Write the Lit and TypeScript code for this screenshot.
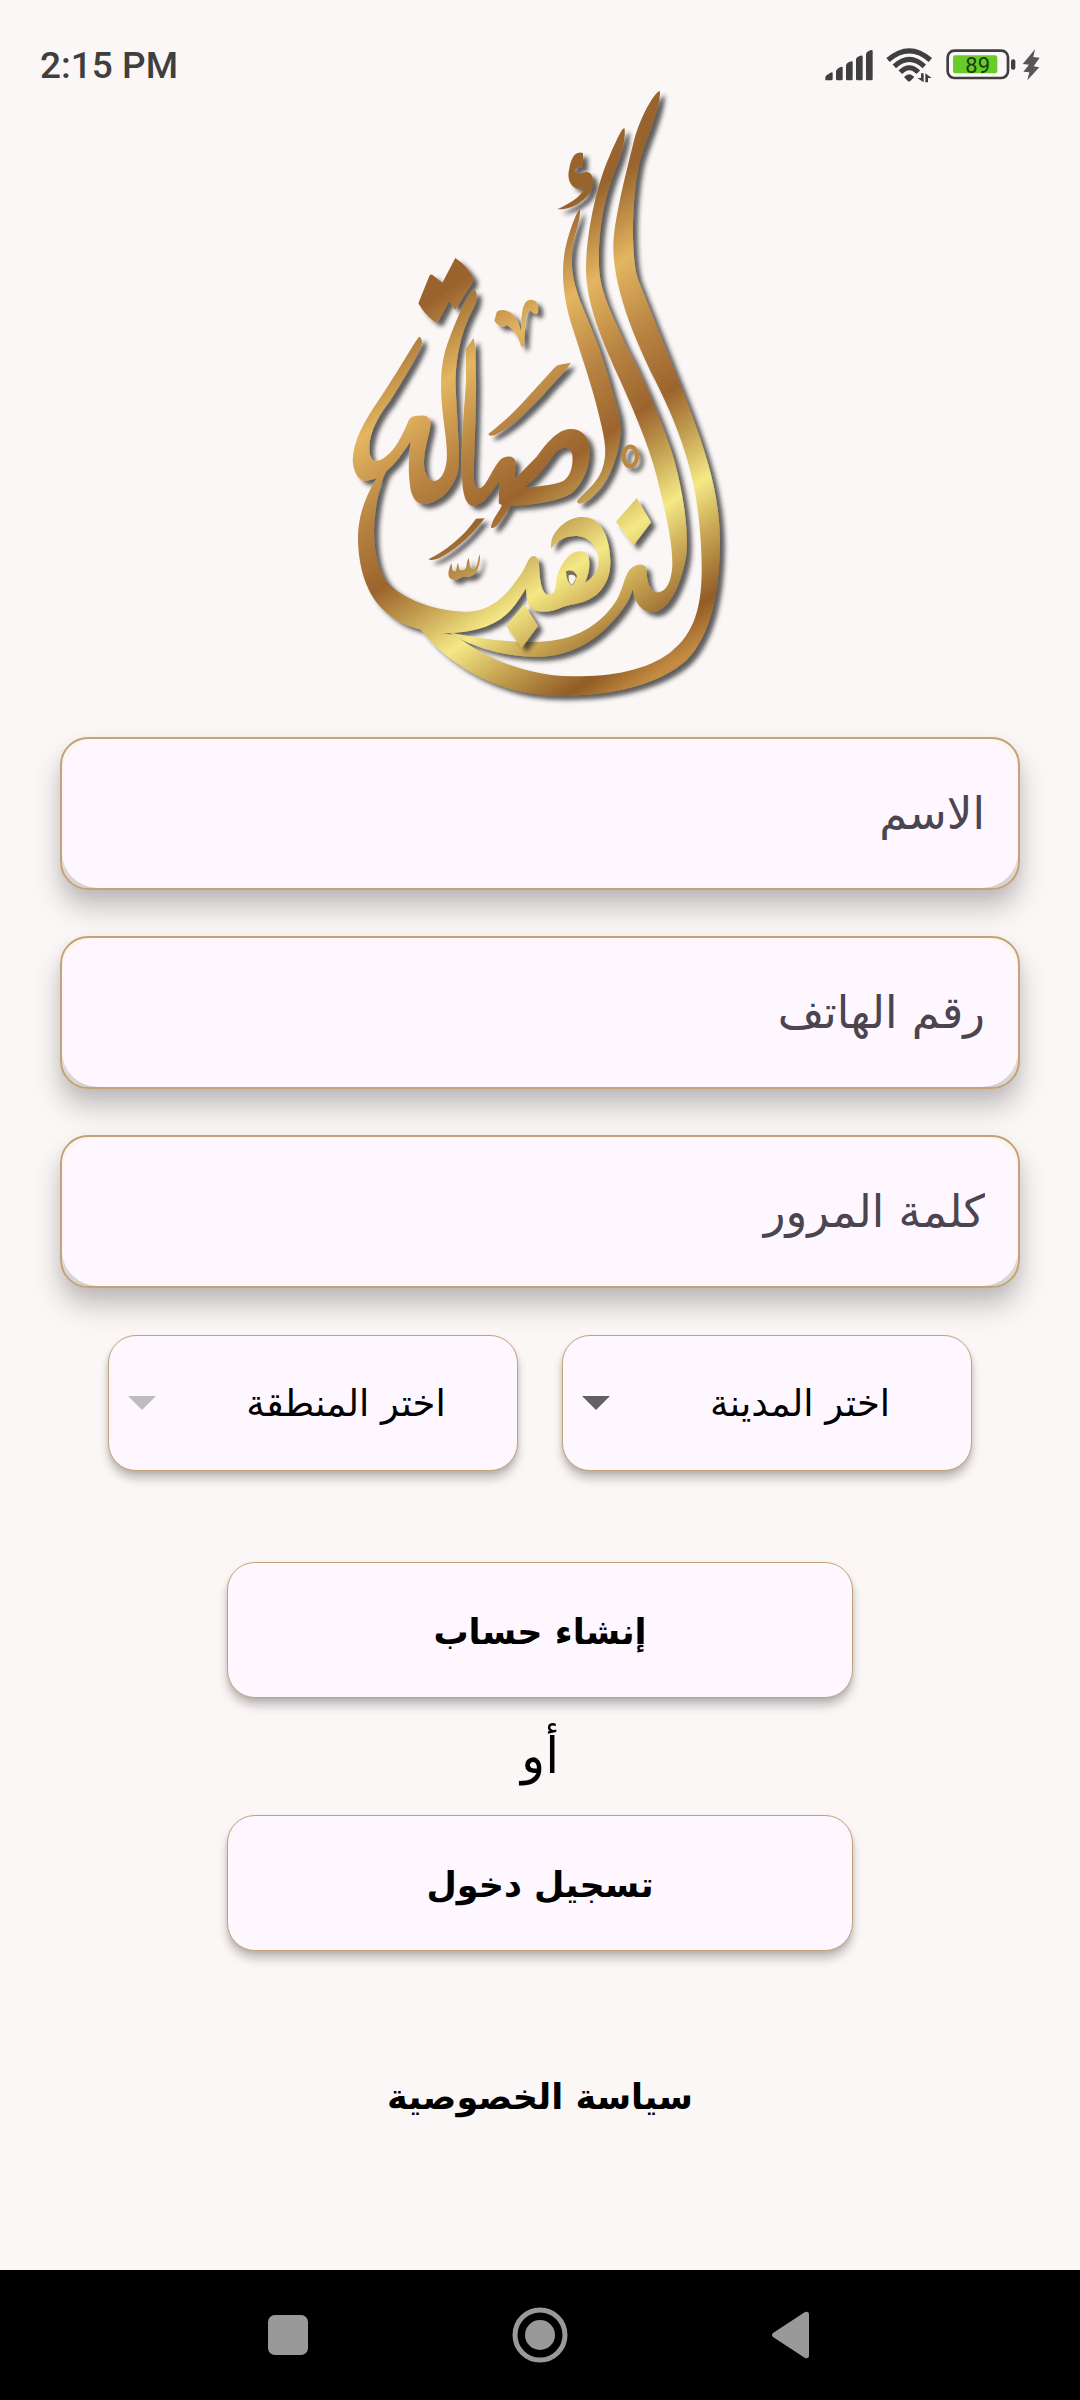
import { LitElement, html, css } from "lit";
import { customElement, property } from "lit/decorators.js";

@customElement("status-bar")
class StatusBar extends LitElement {
  static styles = css`
    :host {
      display: flex;
      align-items: center;
      justify-content: space-between;
      height: 44px;
      padding: 44px 40px 0;
      direction: ltr;
      color: #3f3f3f;
    }
    .time {
      font: 500 37px/44px Roboto, sans-serif;
    }
    .icons,
    .power {
      display: flex;
      align-items: center;
    }
    .icons {
      gap: 13px;
    }
    .power {
      gap: 6px;
    }
    svg {
      display: block;
      height: 37px;
      margin-bottom: 2px;
      fill: #3f3f3f;
    }
    .line {
      fill: none;
      stroke: #3f3f3f;
    }
    .level {
      fill: #66cc29;
    }
    .percent {
      font: 66px Roboto, sans-serif;
      fill: #1d3d0c;
    }
    .bolt {
      fill: #5a5558;
    }
  `;

  render() {
    return html`
      <span class="time">2:15 PM</span>
      <div class="icons">
        <svg viewBox="72 50 144 111" width="48" aria-hidden="true">
          <path d="M73 150V140Q75 134 84 130Q95 123 95 128V146Q95 150 91 150Z" />
          <path d="M105 146V122Q106 117 114 112Q125 106 125 112V146Q125 150 121 150H109Q105 150 105 146Z" />
          <path d="M135 146V104Q136 99 144 95Q155 90 155 95V146Q155 150 151 150H139Q135 150 135 146Z" />
          <path d="M165 146V86Q166 81 174 78Q185 73 185 79V146Q185 150 181 150H169Q165 150 165 146Z" />
          <path d="M195 146V70Q196 65 204 61Q215 56 215 62V146Q215 150 211 150H199Q195 150 195 146Z" />
        </svg>
        <svg viewBox="254 50 141 111" width="47" aria-hidden="true">
          <g class="line" stroke-width="15">
            <path d="M260 89Q324 34 387 89" />
            <path d="M279 108Q324 66 369 108" />
            <path d="M297 126Q324 98 351 126" />
          </g>
          <path d="M308 140Q324 124 339 140L327 152Q323 155 319 152Z" />
          <path d="M359 129H367V156L348 143H359ZM372 156V129L391 143H380V156Z" />
        </svg>
        <div class="power">
          <svg viewBox="437 50 210 111" width="70" role="img" aria-label="89">
            <rect class="line" x="442" y="61" width="181" height="82" rx="20" stroke-width="8" />
            <rect x="632" y="87" width="13" height="31" rx="6" />
            <rect class="level" x="458" y="75" width="133" height="54" rx="7" />
            <text class="percent" x="532" y="127" text-anchor="middle">89</text>
          </svg>
          <svg class="bolt" viewBox="666 50 54 111" width="18" aria-hidden="true">
            <path d="M705 57L668 101L687 103L670 124L688 126L682 150L718 111L701 108L719 82L700 80Z" />
          </svg>
        </div>
      </div>
    `;
  }
}

@customElement("brand-logo")
class BrandLogo extends LitElement {
  static styles = css`
    :host {
      display: flex;
      justify-content: center;
    }
    svg {
      display: block;
      width: 400px;
      max-width: 100%;
      overflow: visible;
    }
    .ring {
      fill: none;
      stroke: #b98740;
      stroke-width: 13;
    }
  `;

  render() {
    return html`
      <svg viewBox="0 0 1200 1890" role="img" aria-label="أصالة الذهب">
        <defs>
          <linearGradient id="gold" gradientUnits="userSpaceOnUse" x1="372" y1="547" x2="1162" y2="1710">
            <stop offset="0.03" stop-color="#99642f" />
            <stop offset="0.187" stop-color="#e4b660" />
            <stop offset="0.34" stop-color="#b78342" />
            <stop offset="0.475" stop-color="#9c642d" />
            <stop offset="0.56" stop-color="#c09a4e" />
            <stop offset="0.671" stop-color="#f5e985" />
            <stop offset="0.76" stop-color="#ccab57" />
            <stop offset="0.888" stop-color="#915c25" />
            <stop offset="0.96" stop-color="#c48c42" />
          </linearGradient>
          <filter id="cast" filterUnits="userSpaceOnUse" x="0" y="0" width="1260" height="1920">
            <feDropShadow dx="15" dy="13" stdDeviation="6" flood-color="#222" flood-opacity="0.72" />
          </filter>
        </defs>
        <g fill="url(#gold)" filter="url(#cast)">
          <path
            d="M960 34C950 28 900 105 880 190C855 290 820 430 820 500C820 620 880 770 945 900C1010 1030 1040 1120 1060 1210C1078 1300 1086 1400 1085 1480C1083 1580 1065 1660 990 1718C920 1770 820 1789 700 1789C570 1789 440 1740 345 1665L302 1660C380 1660 455 1645 500 1602C530 1574 545 1545 558 1525C560 1555 562 1575 575 1587C600 1602 640 1595 670 1580C700 1572 740 1570 772 1542C805 1510 812 1475 811 1440C809 1400 800 1350 770 1325C740 1304 700 1308 670 1332C640 1356 630 1380 634 1406C655 1376 685 1366 712 1368C755 1372 775 1410 775 1440C775 1475 760 1492 735 1508C748 1480 752 1450 744 1426C735 1410 705 1408 684 1430C660 1455 650 1485 648 1512C646 1535 640 1543 620 1544C600 1530 600 1490 597 1455C595 1435 588 1424 574 1430C560 1440 556 1470 530 1500C490 1560 440 1595 380 1595C290 1594 200 1562 150 1515C115 1480 102 1420 102 1350C104 1280 122 1200 140 1172C165 1155 190 1115 212 1084C204 1140 205 1190 212 1230C220 1262 235 1273 255 1272C300 1268 340 1225 354 1175C362 1120 350 1010 347 920C344 840 365 750 395 695C412 665 415 640 404 630C385 628 350 720 330 770C305 830 301 890 304 950C309 1030 324 1090 320 1140C316 1180 300 1204 280 1203C258 1198 251 1170 252 1140C254 1100 270 1060 272 1030C270 1008 255 1006 238 1007C220 1006 208 1012 204 1026C185 1070 165 1110 140 1127C115 1150 90 1150 88 1110C86 1060 115 1005 150 963C190 900 235 825 246 790C246 775 240 768 236 772C215 800 180 865 120 955C75 1020 40 1080 38 1140C40 1180 58 1205 80 1203L110 1195C75 1250 54 1310 54 1375C55 1470 82 1540 125 1585C165 1625 205 1640 243 1649C285 1705 350 1755 420 1792C510 1835 590 1848 670 1847C820 1847 960 1812 1040 1740C1110 1668 1140 1540 1140 1380C1138 1240 1100 1120 1035 950C1000 860 930 690 895 600C870 530 876 340 900 240C925 160 960 90 960 34Z"
          />
          <path
            d="M854 146C848 138 830 180 810 225C775 300 738 450 738 570C740 680 790 790 840 900C890 1010 940 1130 960 1230C982 1320 997 1390 997 1450C996 1510 975 1540 948 1537C920 1525 922 1490 918 1462C910 1448 885 1452 870 1468C850 1495 852 1520 830 1560C790 1625 720 1675 620 1684C540 1690 440 1680 330 1658L345 1668C430 1715 520 1732 600 1730C690 1728 760 1685 810 1632C845 1595 868 1565 878 1528C885 1570 905 1598 940 1597C985 1594 1025 1510 1038 1430C1050 1340 1020 1190 990 1100C960 1010 900 870 860 800C820 710 780 640 777 560C773 430 800 330 835 245C845 215 857 180 854 146Z"
          />
          <path
            d="M720 388C712 388 680 470 672 530C664 590 672 670 700 750C725 830 760 930 778 1010C795 1080 804 1120 785 1172C770 1210 735 1235 713 1260C708 1270 716 1274 730 1268C770 1250 810 1195 828 1130C845 1080 846 1030 832 985C810 910 790 830 758 755C725 670 690 610 696 520C698 470 722 430 720 388Z"
          />
          <path
            d="M729 219C703 210 692 240 688 265C680 295 690 318 710 326L733 325C725 350 685 372 652 388C710 390 755 345 760 312C760 285 750 273 735 277L715 281C702 274 705 264 715 263L729 262Z"
          />
          <path
            d="M346 534Q378 555 398 590Q402 597 398 606L346 690L328 662L296 722Q291 730 280 722Q255 705 235 670L268 588Q272 581 278 585L307 608Z"
          />
          <path
            fill-rule="evenodd"
            d="M401 773L378 806L378 900C374 980 362 1080 366 1190C368 1250 380 1278 402 1278C440 1270 455 1230 478 1204L476 1270L486 1276C475 1300 455 1320 453 1343C470 1350 490 1310 511 1278C580 1276 650 1265 690 1243C735 1210 750 1150 749 1110C748 1065 720 1045 690 1047C650 1050 620 1090 590 1130L524 1197L527 1148C525 1125 495 1125 480 1140C455 1170 445 1205 426 1222C410 1232 400 1215 401 1180C404 1080 409 980 408 900L406 800ZM550 1223C600 1190 625 1145 648 1117C670 1098 690 1098 697 1125C700 1160 690 1190 670 1203C640 1216 590 1220 550 1223Z"
          />
          <path
            d="M692 848L658 854Q650 855 642 865L560 955C520 1000 480 1035 445 1062Q450 1074 475 1060C530 1030 575 980 610 945C640 905 670 885 692 848Z"
          />
          <path
            d="M463 722L470 697C480 685 505 690 520 705C535 720 538 735 543 755C545 730 540 660 572 659C590 660 597 670 594 700Q580 706 574 694C560 685 557 715 556 735L552 795Q547 808 542 795C535 770 520 745 500 736C490 745 475 740 463 722Z"
          />
          <path d="M434 1315L408 1316C370 1370 320 1410 265 1438Q280 1444 310 1428C360 1400 400 1360 434 1315Z" />
          <path
            d="M334 1450C320 1480 322 1500 345 1500C360 1498 364 1488 380 1490C408 1494 422 1460 420 1423C412 1435 414 1464 400 1467C388 1468 390 1450 386 1434C376 1448 384 1466 370 1470C354 1474 358 1460 354 1448C348 1460 352 1476 342 1474C334 1470 338 1460 334 1450Z"
          />
          <path d="M890 1254L933 1327L880 1397L828 1325Z" />
        </g>
        <ellipse class="ring" cx="871" cy="1129" rx="20" ry="29" filter="url(#cast)" />
        <path d="M678 1474Q700 1466 711 1488Q704 1512 694 1516Q680 1506 678 1474Z" fill="#77705c" />
        <path d="M686 1486Q702 1480 708 1494Q702 1510 694 1514Q684 1506 686 1486Z" fill="#f6f2ee" />
        <g fill="url(#gold)" filter="url(#cast)">
          <path d="M553 1573L594 1638L545 1704L498 1637Z" />
        </g>
      </svg>
    `;
  }
}

@customElement("text-field")
class TextField extends LitElement {
  static styles = css`
    :host {
      display: block;
    }
    .box {
      display: flex;
      border: 2px solid #c3a377;
      border-radius: 28px;
      background: linear-gradient(#fbf5ef 50%, #d3d1cf);
      box-shadow: 0 18px 28px rgba(0, 0, 0, 0.22), 0 6px 14px rgba(0, 0, 0, 0.06);
    }
    input {
      flex: 1;
      min-width: 0;
      height: 149px;
      box-sizing: border-box;
      padding: 0 33px;
      border: 0;
      border-radius: 36px;
      outline: none;
      background: #fef7ff;
      color: #4a454e;
      direction: rtl;
      font: 45px "DejaVu Sans", sans-serif;
    }
    input::placeholder {
      color: #4a454e;
      opacity: 1;
    }
  `;

  @property() label = "";
  @property() type = "text";

  render() {
    return html`
      <div class="box">
        <input type=${this.type} placeholder=${this.label} aria-label=${this.label} />
      </div>
    `;
  }
}

@customElement("select-field")
class SelectField extends LitElement {
  static styles = css`
    :host {
      display: block;
      flex: 1;
      min-width: 0;
    }
    .box {
      display: grid;
      align-items: center;
      direction: ltr;
    }
    select,
    svg {
      grid-area: 1 / 1;
    }
    select {
      width: 100%;
      height: 136px;
      box-sizing: border-box;
      padding: 0 0 0 66px;
      border: 1px solid #c3a377;
      border-radius: 28px;
      background: #fef7ff;
      box-shadow: 0 8px 10px rgba(0, 0, 0, 0.22), 0 2px 4px rgba(0, 0, 0, 0.1);
      color: #000;
      opacity: 1;
      appearance: none;
      direction: rtl;
      text-align: center;
      text-align-last: center;
      font: 37px "DejaVu Sans", sans-serif;
    }
    svg {
      margin-left: 20px;
      fill: #616161;
      pointer-events: none;
    }
    select:disabled + svg {
      fill: #bdbdbd;
    }
  `;

  @property() label = "";
  @property({ type: Boolean }) disabled = false;

  render() {
    return html`
      <div class="box">
        <select aria-label=${this.label} ?disabled=${this.disabled}>
          <option>${this.label}</option>
        </select>
        <svg width="28" height="14" viewBox="0 0 28 14" aria-hidden="true"><path d="M0 0H28L14 14Z" /></svg>
      </div>
    `;
  }
}

@customElement("nav-bar")
class NavBar extends LitElement {
  static styles = css`
    :host {
      display: flex;
      justify-content: space-around;
      align-items: center;
      height: 130px;
      padding: 0 15%;
      background: #000;
      direction: ltr;
    }
    button {
      display: flex;
      padding: 0;
      border: 0;
      background: none;
    }
    svg {
      fill: #999;
    }
    .ring {
      fill: none;
      stroke: #999;
      stroke-width: 5;
    }
  `;

  render() {
    return html`
      <button aria-label="Recents">
        <svg width="60" height="60"><rect x="10" y="10" width="40" height="40" rx="7" /></svg>
      </button>
      <button aria-label="Home">
        <svg width="60" height="60"><circle class="ring" cx="30" cy="30" r="25" /><circle cx="30" cy="30" r="15" /></svg>
      </button>
      <button aria-label="Back">
        <svg width="60" height="60"><path d="M43 7Q47 6 47 10V50Q47 54 43 53L11 32Q9 30 11 28Z" /></svg>
      </button>
    `;
  }
}

@customElement("app-root")
class AppRoot extends LitElement {
  static styles = css`
    :host {
      display: flex;
      flex-direction: column;
      min-height: 100vh;
      background: #fbf7f6;
      color: #000;
      direction: rtl;
      font-family: "DejaVu Sans", sans-serif;
    }
    brand-logo {
      margin-top: -8px;
    }
    main {
      flex: 1;
      display: flex;
      flex-direction: column;
      padding: 27px 60px 40px;
    }
    .fields {
      display: flex;
      flex-direction: column;
      gap: 46px;
    }
    .selects {
      display: flex;
      gap: 44px;
      padding: 47px 48px 0;
    }
    .actions {
      display: flex;
      flex-direction: column;
      align-items: center;
      padding-top: 91px;
    }
    .action {
      width: 100%;
      max-width: 626px;
      height: 136px;
      padding: 4px 0 0;
      border: 1px solid #c3a377;
      border-radius: 28px;
      background: #fef7ff;
      box-shadow: 0 8px 10px rgba(0, 0, 0, 0.22), 0 2px 4px rgba(0, 0, 0, 0.1);
      color: #000;
      font: 700 35px "DejaVu Sans", sans-serif;
    }
    .or {
      font-size: 50px;
      line-height: 117px;
    }
    .privacy {
      margin-top: 116px;
      color: #000;
      font-size: 35px;
      font-weight: 700;
      line-height: 60px;
      text-decoration: none;
    }
  `;

  render() {
    return html`
      <status-bar></status-bar>
      <brand-logo></brand-logo>
      <main>
        <div class="fields">
          <text-field label="الاسم"></text-field>
          <text-field label="رقم الهاتف" type="tel"></text-field>
          <text-field label="كلمة المرور" type="password"></text-field>
        </div>
        <div class="selects">
          <select-field label="اختر المدينة"></select-field>
          <select-field label="اختر المنطقة" disabled></select-field>
        </div>
        <div class="actions">
          <button class="action">إنشاء حساب</button>
          <span class="or">أو</span>
          <button class="action">تسجيل دخول</button>
          <a class="privacy" href="#privacy">سياسة الخصوصية</a>
        </div>
      </main>
      <nav-bar></nav-bar>
    `;
  }
}
